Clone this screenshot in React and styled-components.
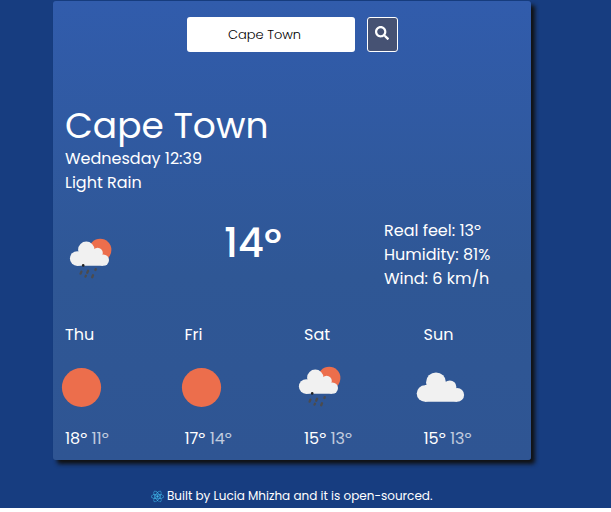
import React from "react";
import styled, { createGlobalStyle } from "styled-components";
import { FaReact, FaSearch } from "react-icons/fa";

const GlobalStyle = createGlobalStyle`
  *, *::before, *::after { box-sizing: border-box; }
  body {
    margin: 0;
    background: #fff;
    font-family: Poppins, Inter, "Open Sans", sans-serif;
    font-size: 16px;
    line-height: 24px;
    color: #fff;
  }
`;

const Page = styled.div`
  height: 508px;
  padding: 1px 80px 0 53px;
  background: #173d80;
  overflow: hidden;
`;

const Card = styled.main`
  height: 459px;
  padding: 16px 0 0 12px;
  border-radius: 3px;
  background: linear-gradient(#315cac, #2f5795 60%, #2f5593);
  box-shadow: 4px 4px 4px #111;
`;

const SearchForm = styled.form`
  display: flex;
  gap: 12px;
  padding-left: 122px;
`;

const SearchInput = styled.input`
  width: 168px;
  height: 35px;
  padding: 0 13px 0 0;
  border: 0;
  border-radius: 3px;
  background: #fff;
  color: #000;
  font: 300 13px Poppins, Inter, sans-serif;
  text-align: center;
`;

const SearchButton = styled.button`
  display: flex;
  align-items: center;
  justify-content: center;
  width: 31px;
  height: 35px;
  padding: 0 1px 3px 0;
  border: 1px solid #fff;
  border-radius: 3px;
  background: #465273;
  color: #fff;
  font-size: 14px;
`;

const City = styled.h1`
  margin: 52px 0 0;
  font-size: 36px;
  font-weight: 400;
  line-height: 43px;
`;

const Line = styled.div`
  white-space: nowrap;
`;

const Current = styled.section`
  display: grid;
  grid-template-columns: 159px 160px 1fr;
  height: 104px;
  margin-top: 24px;
`;

const CurrentIcon = styled.div`
  padding: 18px 0 0 3px;
`;

const Temperature = styled.div`
  font-size: 40px;
  font-weight: 500;
  line-height: 48px;
`;

const Forecast = styled.section`
  display: grid;
  grid-template-columns: repeat(4, 119.5px);
`;

const IconSlot = styled.div`
  height: 80px;
  padding-top: 16px;
  margin-left: -8px;

  svg { display: block; }
`;

const Low = styled.span`
  opacity: 0.7;
`;

const Footer = styled.footer`
  display: flex;
  align-items: center;
  gap: 3px;
  padding: 24px 0 0 98px;
  font-size: 12px;
  white-space: nowrap;

  svg { color: #3fb4e8; font-size: 13px; }
`;

const CLOUD = "#f1f1f1";
const SUN = "#ec6e4c";

const RainIcon = () => (
  <svg width="44" height="42" viewBox="0 0 44 42" display="block">
    <circle cx="32.2" cy="13" r="11.2" fill={SUN} />
    <g fill={CLOUD}>
      <circle cx="9.3" cy="21.6" r="7.4" />
      <circle cx="18.3" cy="12.8" r="8.2" />
      <circle cx="29.6" cy="16" r="5.2" />
      <circle cx="35.3" cy="23.1" r="5.7" />
      <path d="M9.3 15H26L35 19V28.8H9.3Z" />
    </g>
    <g stroke="#4b4b4e" strokeWidth="2.3" strokeLinecap="round">
      <path d="M12.6 36.6l.8-2M19.2 35.8l.9-2M27.4 33l.3-.8M17.5 39.6l.4-.8M24.2 40.2l.8-2" />
      <path d="M15.2 28.5v-.1" stroke="#222" strokeWidth="2.6" />
    </g>
  </svg>
);

const SunIcon = () => (
  <svg width="52" height="52" viewBox="0 0 52 52">
    <circle cx="24.5" cy="24.5" r="19.6" fill={SUN} />
  </svg>
);

const CloudIcon = () => (
  <svg width="52" height="52" viewBox="1 0 52 52">
    <g fill={CLOUD}>
      <circle cx="10" cy="30.5" r="8.3" />
      <circle cx="21" cy="19.4" r="10" />
      <circle cx="34.8" cy="24" r="6.6" />
      <circle cx="42.2" cy="31.9" r="6.9" />
      <path d="M10 22H34L42 26V38.8H10Z" />
    </g>
  </svg>
);

const ForecastRain = styled.div`
  padding: 2px 0 0 1px;
`;

const ICONS = {
  sun: <SunIcon />,
  rain: <ForecastRain><RainIcon /></ForecastRain>,
  cloud: <CloudIcon />,
};

const DAYS = [
  { name: "Thu", icon: "sun", high: "18º", low: "11º" },
  { name: "Fri", icon: "sun", high: "17º", low: "14º" },
  { name: "Sat", icon: "rain", high: "15º", low: "13º" },
  { name: "Sun", icon: "cloud", high: "15º", low: "13º" },
];

export default function App() {
  return (
    <>
      <GlobalStyle />
      <Page>
        <Card>
          <SearchForm>
            <SearchInput defaultValue="Cape Town" aria-label="City" />
            <SearchButton type="button" aria-label="Search"><FaSearch /></SearchButton>
          </SearchForm>
          <City>Cape Town</City>
          <Line>Wednesday 12:39</Line>
          <Line>Light Rain</Line>
          <Current>
            <CurrentIcon><RainIcon /></CurrentIcon>
            <Temperature>14º</Temperature>
            <div>
              <Line>Real feel: 13º</Line>
              <Line>Humidity: 81%</Line>
              <Line>Wind: 6 km/h</Line>
            </div>
          </Current>
          <Forecast>
            {DAYS.map((day) => (
              <div key={day.name}>
                <Line>{day.name}</Line>
                <IconSlot>{ICONS[day.icon]}</IconSlot>
                <Line>
                  {day.high} <Low>{day.low}</Low>
                </Line>
              </div>
            ))}
          </Forecast>
        </Card>
        <Footer><FaReact />Built by Lucia Mhizha and it is open-sourced.</Footer>
      </Page>
    </>
  );
}
